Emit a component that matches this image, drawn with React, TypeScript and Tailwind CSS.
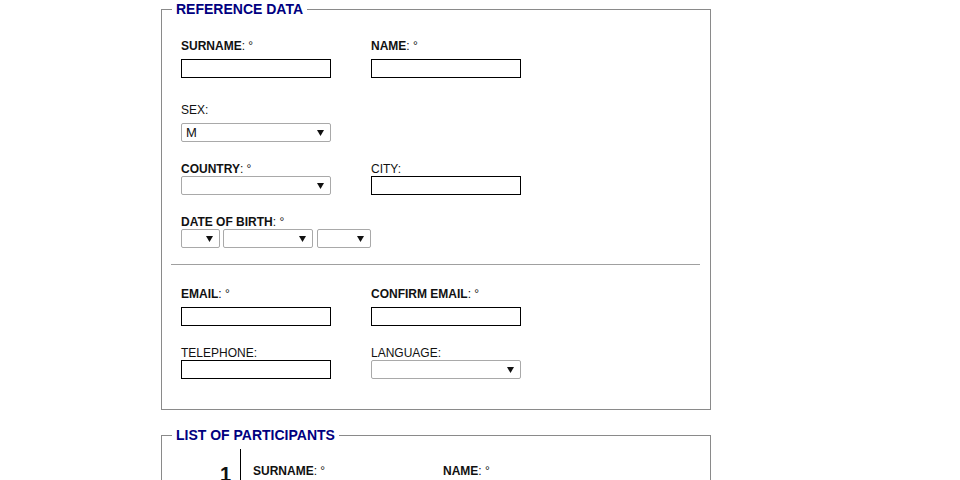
const labelCls = "block pt-[1px] text-[12px] leading-[14px] text-[#111]";

function Label(props: { text: string; bold?: boolean; req?: boolean; gap: string }) {
  return (
    <label className={`${labelCls} ${props.gap}`}>
      {props.bold ? <b>{props.text}</b> : props.text}
      {props.req ? ": °" : ":"}
    </label>
  );
}

function TextBox() {
  return <input type="text" className="block h-[19px] w-[150px] border border-black bg-white px-1 text-[12px] outline-none" />;
}

function Select(props: { w: string; value?: string }) {
  return (
    <div className={`relative h-[19px] ${props.w} rounded-[2px] border border-[#a9a9a9] bg-white`}>
      <select className="block h-[17px] w-full appearance-none bg-transparent py-0 pl-[4px] text-[13px] leading-[17px] text-[#111] outline-none" defaultValue={props.value ?? ""}>
        <option value="">{props.value ?? ""}</option>
      </select>
      <svg className="pointer-events-none absolute right-[6px] top-[6px]" width="7" height="6" viewBox="0 0 7 6">
        <path d="M0 0H7L3.5 6Z" fill="#111" />
      </svg>
    </div>
  );
}

export default function App() {
  return (
    <div className="min-h-[480px] bg-white font-['Liberation_Sans',Arial,sans-serif]">
      <div className="ml-[161px] w-[550px]">
        <fieldset className="mt-[1px] border border-[#8a8a8a] px-[9px] pb-[30px]">
          <legend className="ml-[1px] px-1 text-[14px] font-bold leading-[16px] text-[#000080]">REFERENCE DATA</legend>

          <div className="grid grid-cols-[190px_150px] pl-[10px] pt-[21px]">
            <div>
              <Label text="SURNAME" bold req gap="mb-[6px]" />
              <TextBox />
            </div>
            <div>
              <Label text="NAME" bold req gap="mb-[6px]" />
              <TextBox />
            </div>
          </div>

          <div className="pl-[10px] pt-[24px]">
            <Label text="SEX" gap="mb-[6px]" />
            <Select w="w-[150px]" value="M" />
          </div>

          <div className="grid grid-cols-[190px_150px] pl-[10px] pt-[19px]">
            <div>
              <Label text="COUNTRY" bold req gap="mb-0" />
              <Select w="w-[150px]" />
            </div>
            <div>
              <Label text="CITY" gap="mb-0" />
              <TextBox />
            </div>
          </div>

          <div className="pl-[10px] pt-[19px]">
            <Label text="DATE OF BIRTH" bold req gap="mb-0" />
            <div className="flex gap-[3px]">
              <Select w="w-[39px]" />
              <Select w="w-[90px]" />
              <div className="ml-[1px]">
                <Select w="w-[54px]" />
              </div>
            </div>
          </div>

          <div className="mr-[1px] mt-[16px] h-px bg-[#a0a0a0]" />

          <div className="grid grid-cols-[190px_150px] pl-[10px] pt-[21px]">
            <div>
              <Label text="EMAIL" bold req gap="mb-[6px]" />
              <TextBox />
            </div>
            <div>
              <Label text="CONFIRM EMAIL" bold req gap="mb-[6px]" />
              <TextBox />
            </div>
          </div>

          <div className="grid grid-cols-[190px_150px] pl-[10px] pt-[19px]">
            <div>
              <Label text="TELEPHONE" gap="mb-0" />
              <TextBox />
            </div>
            <div>
              <Label text="LANGUAGE" gap="mb-0" />
              <Select w="w-[150px]" />
            </div>
          </div>
        </fieldset>

        <fieldset className="mt-[17px] border border-[#8a8a8a] px-0 pb-[30px]">
          <legend className="ml-[10px] px-1 text-[14px] font-bold leading-[16px] text-[#000080]">LIST OF PARTICIPANTS</legend>
          <div className="mt-[6px] flex">
            <div className="w-[79px] border-r border-black pr-[9px] pt-[14px] text-right text-[20px] font-bold leading-[22px] text-[#111]">1</div>
            <div className="grid grid-cols-[190px_150px] pl-[12px] pt-[14px]">
              <Label text="SURNAME" bold req gap="mb-[6px]" />
              <Label text="NAME" bold req gap="mb-[6px]" />
            </div>
          </div>
        </fieldset>
      </div>
    </div>
  );
}
